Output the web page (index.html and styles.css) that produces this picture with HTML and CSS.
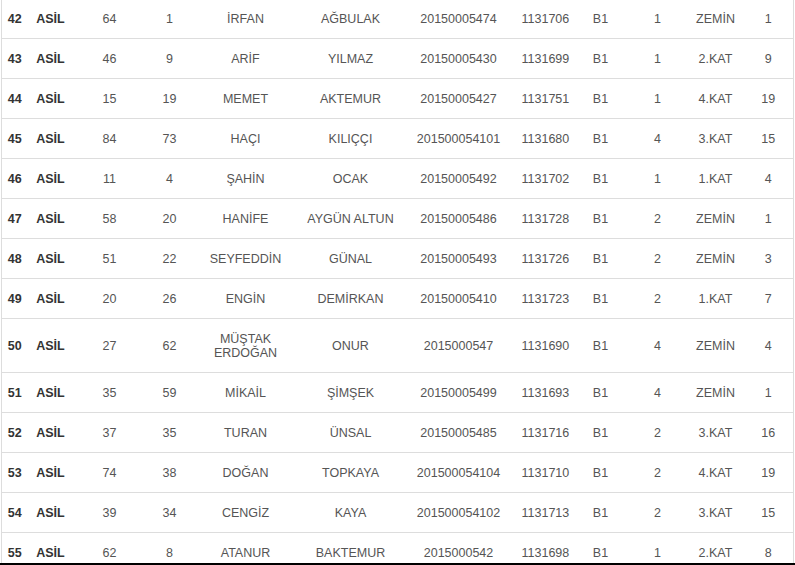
FILE: index.html
```html
<!DOCTYPE html>
<html lang="tr">
<head>
<meta charset="utf-8">
<link rel="stylesheet" href="styles.css">
</head>
<body>
<div class="frame">
<table class="list">
<colgroup>
<col class="c1"><col class="c2"><col class="c3"><col class="c4"><col class="c5"><col class="c6"><col class="c7"><col class="c8"><col class="c9"><col class="c10"><col class="c11"><col class="c12">
</colgroup>
<tbody>
<tr><td class="no">42</td><td class="st">ASİL</td><td>64</td><td>1</td><td>İRFAN</td><td>AĞBULAK</td><td>20150005474</td><td>1131706</td><td>B1</td><td>1</td><td>ZEMİN</td><td>1</td></tr>
<tr><td class="no">43</td><td class="st">ASİL</td><td>46</td><td>9</td><td>ARİF</td><td>YILMAZ</td><td>20150005430</td><td>1131699</td><td>B1</td><td>1</td><td>2.KAT</td><td>9</td></tr>
<tr><td class="no">44</td><td class="st">ASİL</td><td>15</td><td>19</td><td>MEMET</td><td>AKTEMUR</td><td>20150005427</td><td>1131751</td><td>B1</td><td>1</td><td>4.KAT</td><td>19</td></tr>
<tr><td class="no">45</td><td class="st">ASİL</td><td>84</td><td>73</td><td>HAÇI</td><td>KILIÇÇI</td><td>201500054101</td><td>1131680</td><td>B1</td><td>4</td><td>3.KAT</td><td>15</td></tr>
<tr><td class="no">46</td><td class="st">ASİL</td><td>11</td><td>4</td><td>ŞAHİN</td><td>OCAK</td><td>20150005492</td><td>1131702</td><td>B1</td><td>1</td><td>1.KAT</td><td>4</td></tr>
<tr><td class="no">47</td><td class="st">ASİL</td><td>58</td><td>20</td><td>HANİFE</td><td>AYGÜN ALTUN</td><td>20150005486</td><td>1131728</td><td>B1</td><td>2</td><td>ZEMİN</td><td>1</td></tr>
<tr><td class="no">48</td><td class="st">ASİL</td><td>51</td><td>22</td><td>SEYFEDDİN</td><td>GÜNAL</td><td>20150005493</td><td>1131726</td><td>B1</td><td>2</td><td>ZEMİN</td><td>3</td></tr>
<tr><td class="no">49</td><td class="st">ASİL</td><td>20</td><td>26</td><td>ENGİN</td><td>DEMİRKAN</td><td>20150005410</td><td>1131723</td><td>B1</td><td>2</td><td>1.KAT</td><td>7</td></tr>
<tr><td class="no">50</td><td class="st">ASİL</td><td>27</td><td>62</td><td>MÜŞTAK ERDOĞAN</td><td>ONUR</td><td>2015000547</td><td>1131690</td><td>B1</td><td>4</td><td>ZEMİN</td><td>4</td></tr>
<tr><td class="no">51</td><td class="st">ASİL</td><td>35</td><td>59</td><td>MİKAİL</td><td>ŞİMŞEK</td><td>20150005499</td><td>1131693</td><td>B1</td><td>4</td><td>ZEMİN</td><td>1</td></tr>
<tr><td class="no">52</td><td class="st">ASİL</td><td>37</td><td>35</td><td>TURAN</td><td>ÜNSAL</td><td>20150005485</td><td>1131716</td><td>B1</td><td>2</td><td>3.KAT</td><td>16</td></tr>
<tr><td class="no">53</td><td class="st">ASİL</td><td>74</td><td>38</td><td>DOĞAN</td><td>TOPKAYA</td><td>201500054104</td><td>1131710</td><td>B1</td><td>2</td><td>4.KAT</td><td>19</td></tr>
<tr><td class="no">54</td><td class="st">ASİL</td><td>39</td><td>34</td><td>CENGİZ</td><td>KAYA</td><td>201500054102</td><td>1131713</td><td>B1</td><td>2</td><td>3.KAT</td><td>15</td></tr>
<tr><td class="no">55</td><td class="st">ASİL</td><td>62</td><td>8</td><td>ATANUR</td><td>BAKTEMUR</td><td>2015000542</td><td>1131698</td><td>B1</td><td>1</td><td>2.KAT</td><td>8</td></tr>
</tbody>
</table>
</div>
</body>
</html>
```

FILE: styles.css
```css
html, body {
  margin: 0;
  padding: 0;
  background: #fff;
}
.frame {
  height: 563px;
  overflow: hidden;
  border-bottom: 2px solid #000;
}
.list {
  margin-top: -1px;
  margin-left: 1px;
  width: 793px;
  border-collapse: collapse;
  table-layout: fixed;
  font-family: "Liberation Sans", Arial, sans-serif;
  font-size: 12.5px;
  line-height: 14px;
  color: #555;
  border-left: 1px solid #ddd;
  border-right: 1px solid #ddd;
}
.list td {
  padding: 13px 8px 12px;
  text-align: center;
  vertical-align: middle;
  border-bottom: 1px solid #ddd;
}
.list td.no, .list td.st {
  font-weight: bold;
  color: #333;
}
.list td.no { padding: 13px 2px 12px; }
.c1 { width: 26px; }
.c2 { width: 46px; }
.c3 { width: 72px; }
.c4 { width: 48px; }
.c5 { width: 104px; }
.c6 { width: 106px; }
.c7 { width: 110px; }
.c8 { width: 60px; }
.c9 { width: 54px; }
.c10 { width: 60px; }
.c11 { width: 56px; }
.c12 { width: 50px; }
```
